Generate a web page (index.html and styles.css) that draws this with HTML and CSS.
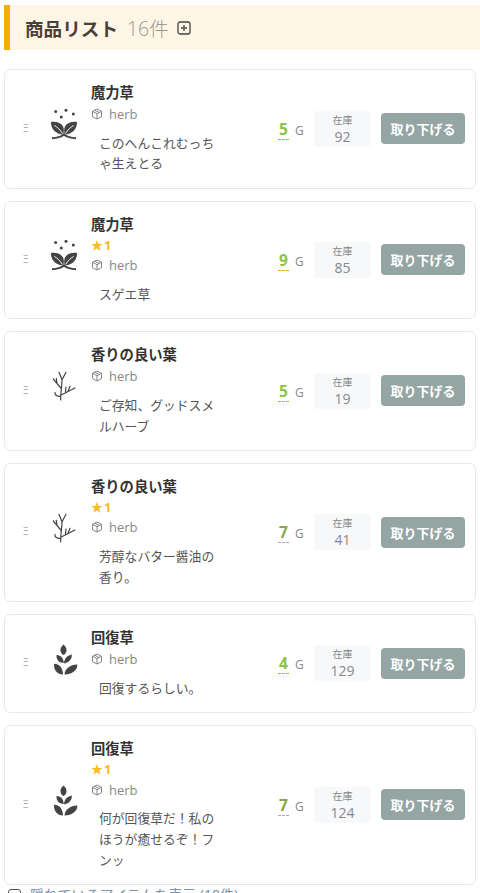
FILE: index.html
```html
<!DOCTYPE html>
<html lang="ja">
<head>
<meta charset="utf-8">
<title>商品リスト</title>
<link rel="stylesheet" href="styles.css">
</head>
<body>
<svg class="defs" width="0" height="0" aria-hidden="true">
  <symbol id="i-sprout" viewBox="0 0 32 32">
    <circle cx="7.700" cy="3.600" r="1.500"/><circle cx="18" cy="2.300" r="1.500"/><circle cx="25.300" cy="6" r="1.500"/><circle cx="13.300" cy="9" r="1.500"/>
    <path d="M3 14c5.500-.6 10 .8 12 4.500 1 1.900 1 4.500.4 8C8 26 2.800 21.500 3 14z"/>
    <path d="M29 14c-5.500-.6-10 .8-12 4.500-1 1.900-1 4.500-.4 8C24 26 29.200 21.500 29 14z"/>
    <path d="M6.500 17.500c2.800 1.700 5.500 4 8 8M25.500 17.500c-2.800 1.700-5.500 4-8 8" fill="none" stroke="#fff" stroke-width="1"/>
    <path d="M4 30.200c4.500 0 8.500-.7 12-3.600 3.500 2.900 7.500 3.600 12 3.600" fill="none" stroke="currentColor" stroke-width="2"/>
  </symbol>
  <symbol id="i-twig" viewBox="0 0 32 32">
    <path d="M12.700 30c-.3-7 1.300-14 1.300-20.300M14 9.700l-3-7.400M14 9.700l4-7.400M5.300 9l7.500 9M8.300 8.300l.7 5.200M27 18l-13.300 6.700M22 16.300l-2 5M18 17l-.7 6.200M7 22.300c-.5 3 2.500 4.500 5.700 4" fill="none" stroke="currentColor" stroke-width="1.200" stroke-linecap="round" stroke-linejoin="round"/>
  </symbol>
  <symbol id="i-wheat" viewBox="0 0 32 32">
    <path d="M15.500 1.500c2.300 2 3.300 4.200 3 6.300-.2 1.700-1.300 3.200-3 4.300-1.700-1.100-2.800-2.600-3-4.300-.3-2.100.7-4.300 3-6.300z"/>
    <path d="M23.800 11.500c.3 4.500-2.500 8-7.800 9 .2-4.800 3-8 7.800-9zM8.500 12c5 .3 7 3.500 7.300 8-4.800-.2-7.600-3.200-7.300-8z"/>
    <path d="M29.300 21.500c.3 5.500-5 10-12.800 10 .4-5.800 5.600-9.700 12.800-10zM6 20.800c6.500.3 8.800 5 9 10.700-5.500 0-9.500-4.400-9-10.700z"/>
  </symbol>
  <symbol id="i-box" viewBox="0 0 12 12">
    <path d="M6 1l4.500 2.300v5.400L6 11 1.500 8.700V3.300zM1.500 3.300L6 5.700l4.500-2.400M6 5.700V11M3.700 2.200l4.500 2.300" fill="none" stroke="currentColor" stroke-width=".9" stroke-linejoin="round"/>
  </symbol>
</svg>

<header class="page-head">
  <h1 class="page-title">商品リスト</h1>
  <span class="page-count">16件</span>
  <svg class="add-icon" viewBox="0 0 14 14"><rect x="1" y="1" width="12" height="12" rx="2"/><path d="M7 4v6M4 7h6"/></svg>
</header>

<main class="list">
  <article class="card">
    <span class="grip">Ξ</span>
    <svg class="item-icon"><use href="#i-sprout"/></svg>
    <div class="info">
      <h2 class="name">魔力草</h2>
      <div class="cat"><svg class="box"><use href="#i-box"/></svg>herb</div>
      <p class="desc">このへんこれむっちゃ生えとる</p>
    </div>
    <div class="price"><b class="amount amber">5</b><span class="unit">G</span></div>
    <div class="stock"><span class="stock-label">在庫</span><span class="stock-num">92</span></div>
    <button class="withdraw">取り下げる</button>
  </article>

  <article class="card">
    <span class="grip">Ξ</span>
    <svg class="item-icon"><use href="#i-sprout"/></svg>
    <div class="info">
      <h2 class="name">魔力草</h2>
      <div class="stars"><span class="star">★</span>1</div>
      <div class="cat"><svg class="box"><use href="#i-box"/></svg>herb</div>
      <p class="desc">スゲエ草</p>
    </div>
    <div class="price"><b class="amount amber">9</b><span class="unit">G</span></div>
    <div class="stock"><span class="stock-label">在庫</span><span class="stock-num">85</span></div>
    <button class="withdraw">取り下げる</button>
  </article>

  <article class="card">
    <span class="grip">Ξ</span>
    <svg class="item-icon"><use href="#i-twig"/></svg>
    <div class="info">
      <h2 class="name">香りの良い葉</h2>
      <div class="cat"><svg class="box"><use href="#i-box"/></svg>herb</div>
      <p class="desc">ご存知、グッドスメルハーブ</p>
    </div>
    <div class="price"><b class="amount amber">5</b><span class="unit">G</span></div>
    <div class="stock"><span class="stock-label">在庫</span><span class="stock-num">19</span></div>
    <button class="withdraw">取り下げる</button>
  </article>

  <article class="card">
    <span class="grip">Ξ</span>
    <svg class="item-icon"><use href="#i-twig"/></svg>
    <div class="info">
      <h2 class="name">香りの良い葉</h2>
      <div class="stars"><span class="star">★</span>1</div>
      <div class="cat"><svg class="box"><use href="#i-box"/></svg>herb</div>
      <p class="desc">芳醇なバター醤油の香り。</p>
    </div>
    <div class="price"><b class="amount dark">7</b><span class="unit">G</span></div>
    <div class="stock"><span class="stock-label">在庫</span><span class="stock-num">41</span></div>
    <button class="withdraw">取り下げる</button>
  </article>

  <article class="card">
    <span class="grip">Ξ</span>
    <svg class="item-icon"><use href="#i-wheat"/></svg>
    <div class="info">
      <h2 class="name">回復草</h2>
      <div class="cat"><svg class="box"><use href="#i-box"/></svg>herb</div>
      <p class="desc">回復するらしい。</p>
    </div>
    <div class="price"><b class="amount amber">4</b><span class="unit">G</span></div>
    <div class="stock"><span class="stock-label">在庫</span><span class="stock-num">129</span></div>
    <button class="withdraw">取り下げる</button>
  </article>

  <article class="card">
    <span class="grip">Ξ</span>
    <svg class="item-icon"><use href="#i-wheat"/></svg>
    <div class="info">
      <h2 class="name">回復草</h2>
      <div class="stars"><span class="star">★</span>1</div>
      <div class="cat"><svg class="box"><use href="#i-box"/></svg>herb</div>
      <p class="desc">何が回復草だ！私のほうが癒せるぞ！フンッ</p>
    </div>
    <div class="price"><b class="amount dark">7</b><span class="unit">G</span></div>
    <div class="stock"><span class="stock-label">在庫</span><span class="stock-num">124</span></div>
    <button class="withdraw">取り下げる</button>
  </article>
</main>

<label class="hidden-toggle"><span class="check"></span><span class="toggle-text">隠れているアイテムを表示 (10件)</span></label>
</body>
</html>
```

FILE: styles.css
```css
html, body { margin: 0; padding: 0; }
body {
  width: 480px;
  height: 893px;
  overflow: hidden;
  background: #fff;
  color: #444;
  font-family: "Open Sans", "Noto Sans CJK JP", sans-serif;
  padding-top: 5px;
  box-sizing: border-box;
}
.defs { position: absolute; }
.page-head {
  display: flex;
  align-items: center;
  height: 45px;
  margin-left: 4px;
  padding: 3px 0 0 15px;
  border-left: 6px solid #f5ad00;
  background: #fdf6e5;
  box-sizing: border-box;
}
.page-title { margin: 0; font-size: 18.600px; font-weight: 700; color: #4a4038; line-height: 1; }
.page-count { margin-left: 9px; font-size: 19.500px; font-weight: 300; color: #999; line-height: 1; }
.add-icon { width: 14px; height: 14px; margin: -3px 0 0 8px; fill: none; stroke: #444; stroke-width: 1.300; }
.list { display: flex; flex-direction: column; gap: 11.700px; margin: 19px 4px 0; }
.card {
  display: flex;
  align-items: center;
  padding: 11px 10px 13.800px 0;
  border: 1px solid #e9e9e9;
  border-radius: 6px;
  box-sizing: border-box;
  background: #fff;
}
.grip { width: 27px; flex: none; padding-left: 18px; box-sizing: border-box; font-size: 10px; line-height: 1; color: #aaa; }
.item-icon { flex: none; width: 32px; height: 32px; margin: -7px 0 0 16px; fill: #444; color: #444; }
.info { flex: none; width: 125px; margin-left: 11px; align-self: flex-start; }
.name { margin: 0; font-size: 14.300px; line-height: 23px; font-weight: 700; color: #333; }
.stars { font-size: 13px; line-height: 19.600px; font-weight: 700; color: #f5bd1f; }
.star { font-size: 12px; margin-right: 1px; }
.cat { display: flex; align-items: center; font-size: 13px; line-height: 20px; color: #888; }
.box { width: 12px; height: 12px; margin-right: 6px; color: #777; }
.desc { margin: 8.600px 0 0 8px; width: 118px; font-size: 12.800px; line-height: 20.800px; color: #555; }
.price { flex: none; display: flex; align-items: baseline; margin: 3px 0 0 auto; width: 36px; }
.amount { font-size: 15.500px; line-height: 20px; font-weight: 700; color: #8bc34a; padding: 0 1px; border-bottom: 1px dashed #e8a800; }
.amount.dark { color: #8aa648; border-bottom-color: #aaa; }
.unit { margin-left: 6px; font-size: 12px; color: #888; }
.stock {
  flex: none;
  display: flex;
  flex-direction: column;
  align-items: center;
  width: 57px;
  height: 36px;
  margin-top: 2px;
  border-radius: 4px;
  background: #f7f8fa;
  color: #888;
}
.stock-label { font-size: 10px; line-height: 16px; margin-top: 1px; }
.stock-num { font-size: 14px; line-height: 17px; }
.withdraw {
  flex: none;
  width: 84px;
  height: 31px;
  margin: 2px 0 0 10px;
  padding: 0;
  border: 0;
  border-radius: 4px;
  background: #95a5a3;
  color: #fff;
  font-family: inherit;
  font-size: 13px;
  font-weight: 700;
}
.hidden-toggle { display: flex; align-items: center; margin: 3px 0 0 8px; height: 14px; }
.check { flex: none; width: 11px; height: 11px; border: 1px solid #555; border-radius: 3px; margin-right: 9px; }
.toggle-text { font-size: 14px; line-height: 14px; color: #7a92a8; white-space: nowrap; }
```
